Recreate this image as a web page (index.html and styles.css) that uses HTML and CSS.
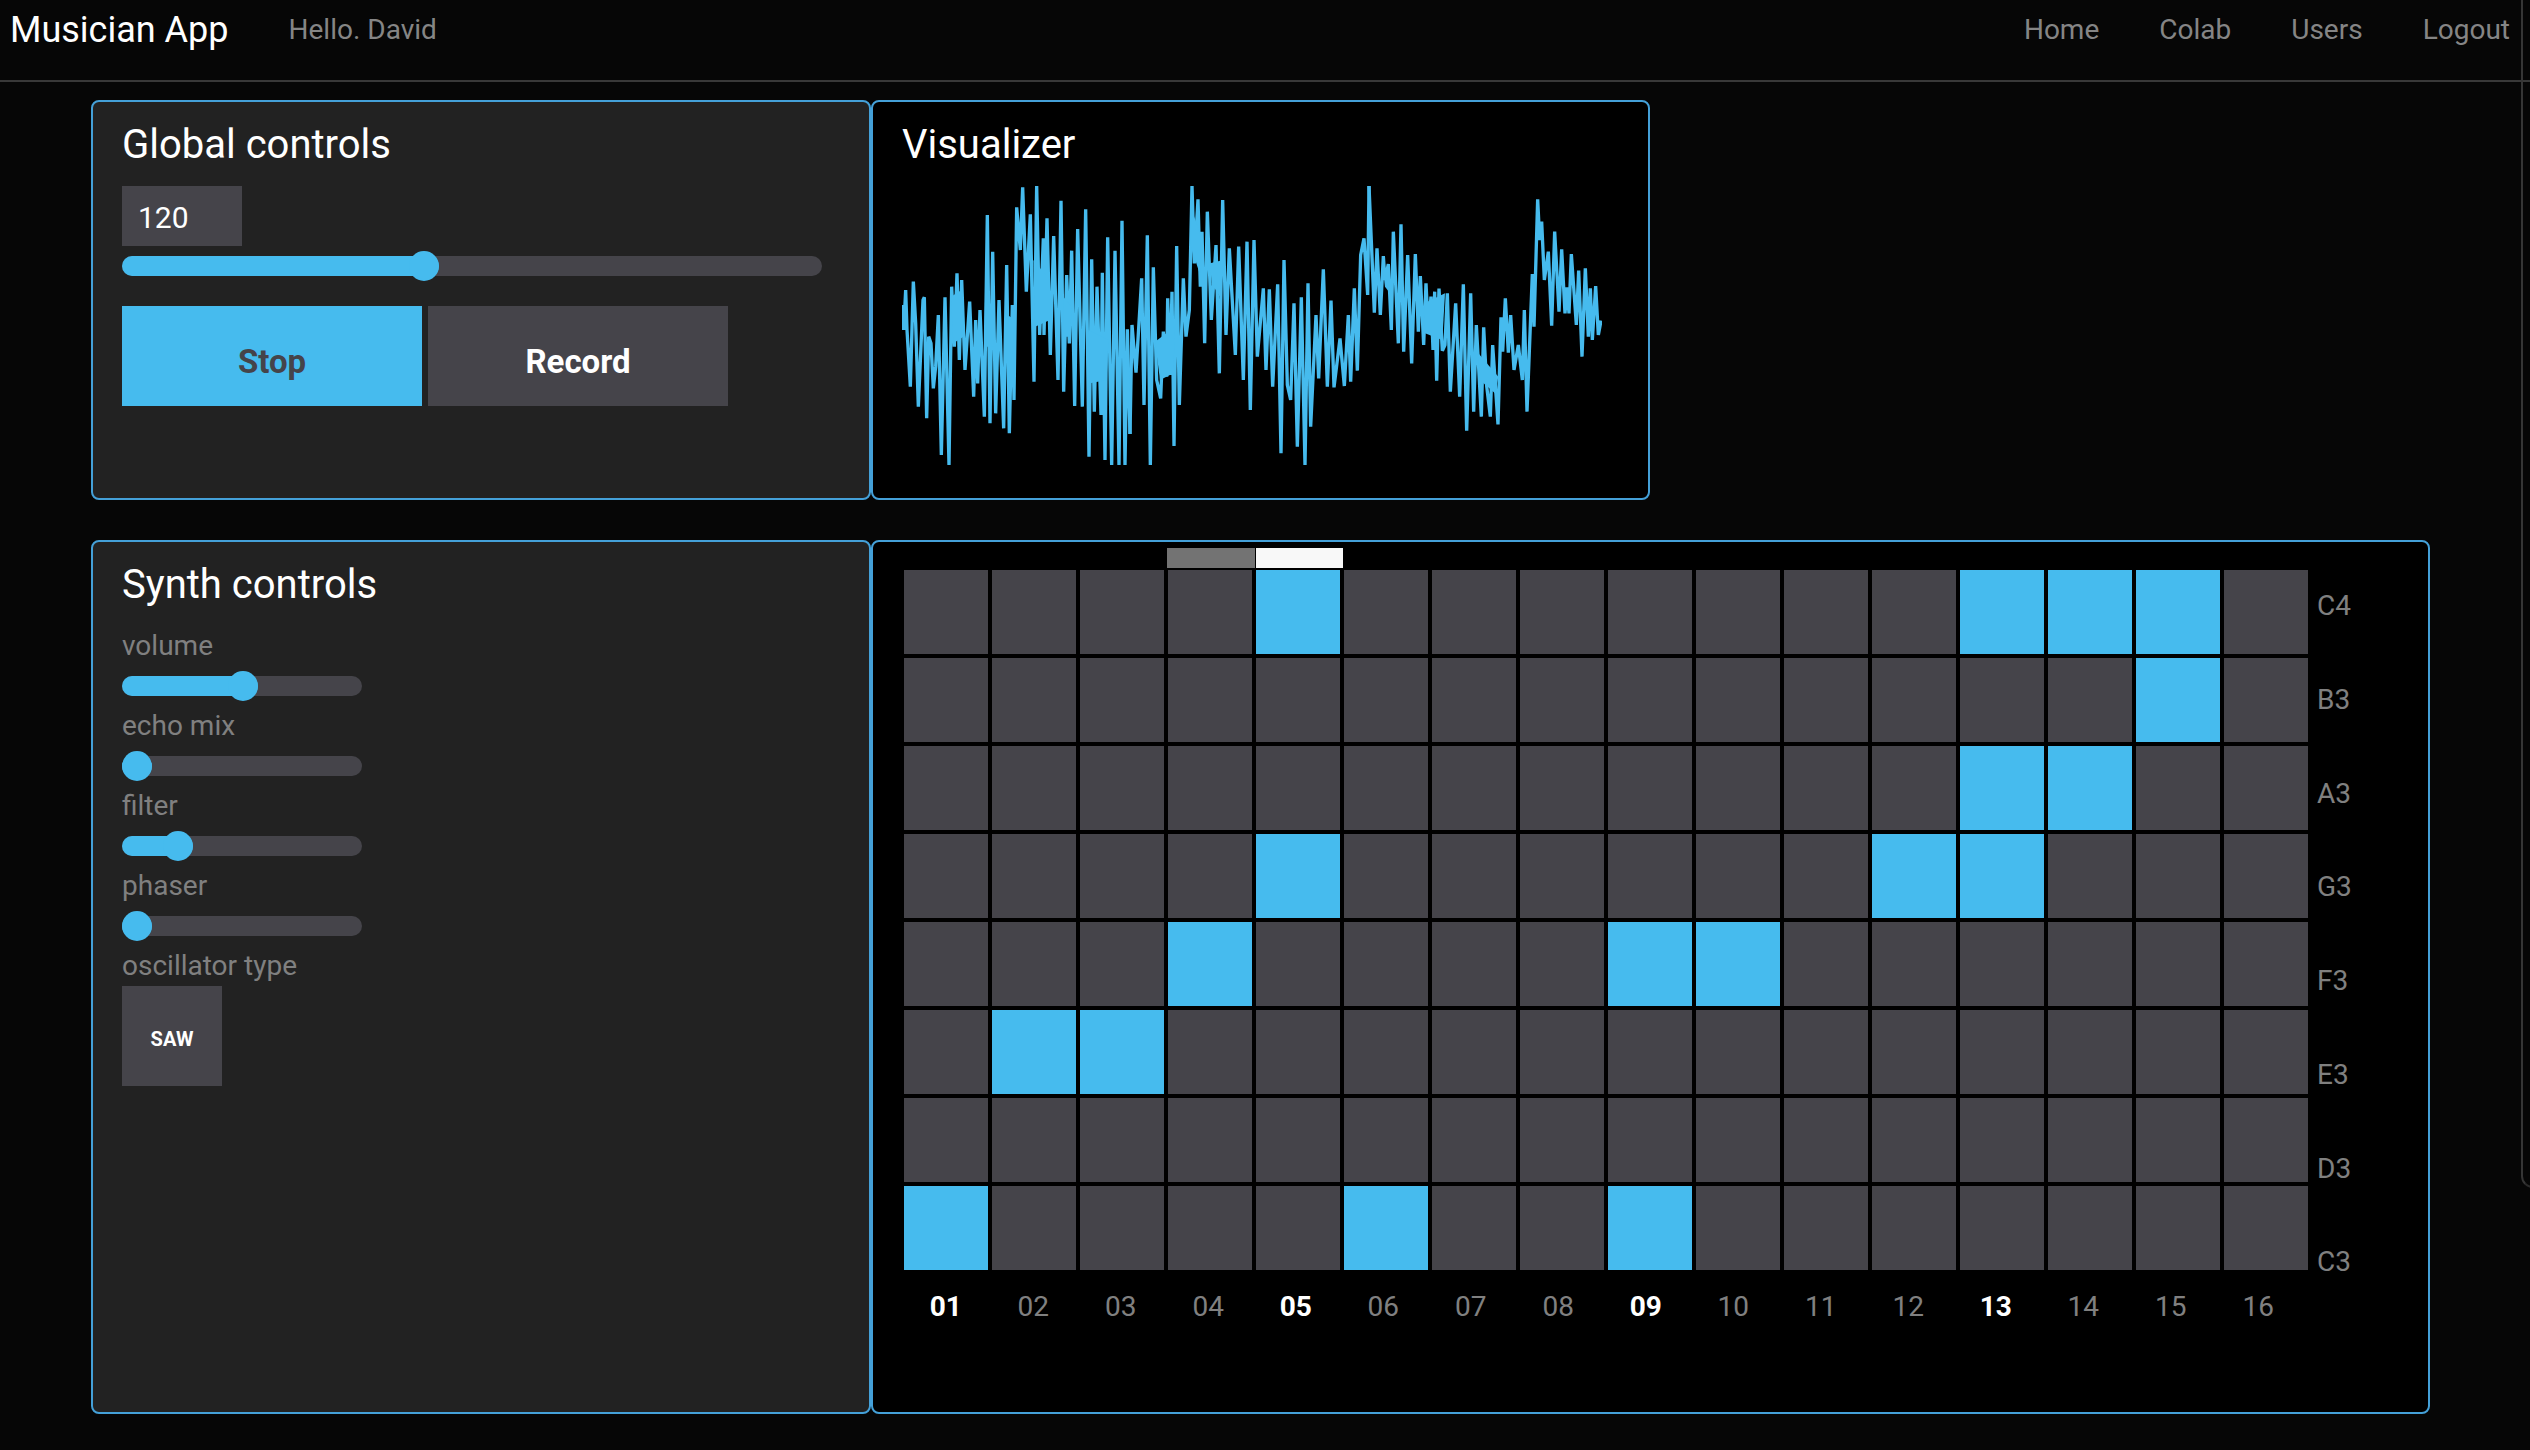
FILE: index.html
```html
<!DOCTYPE html>
<html lang="en">
<head>
    <meta charset="UTF-8">
    <title>Musician App</title>
    <link rel="stylesheet" href="styles.css">
</head>
<body>
    <header class="navbar">
        <a class="brand" href="#">Musician App</a>
        <span class="greeting">Hello. David</span>
        <nav>
            <a href="#">Home</a>
            <a href="#">Colab</a>
            <a href="#">Users</a>
            <a href="#">Logout</a>
        </nav>
    </header>
    <div class="side-drawer"></div>
    <main>
        <div class="row">
            <section class="panel panel-grey">
                <h2>Global controls</h2>
                <input class="tempo" type="text" value="120">
                <div class="slider slider-wide"><div class="fill" style="width: 317px"></div></div>
                <div class="transport">
                    <button class="btn btn-on">Stop</button>
                    <button class="btn">Record</button>
                </div>
            </section>
            <section class="panel panel-black panel-viz">
                <h2>Visualizer</h2>
                <svg class="wave" viewBox="21 18 2100 840">
                    <polyline points="24,375 26,450 32,330 36,450 46,620 55,305 62,430 70,680 84,360 88,352 95,715 101,470 108,490 115,625 122,560 130,405 139,825 150,352 162,855 170,320 178,500 186,280 193,540 200,300 210,570 224,365 236,650 242,420 248,610 255,390 268,710 277,105 285,730 293,215 302,700 312,360 326,745 335,255 343,760 352,375 357,660 365,82 376,210 383,22 394,335 406,103 417,605 425,18 434,465 445,175 447,465 456,115 466,525 476,168 489,600 498,62 506,635 515,285 523,490 530,212 539,678 548,147 562,680 572,88 582,830 590,238 598,695 606,320 618,705 622,278 630,840 638,172 650,855 660,212 672,855 681,122 690,855 697,448 705,762"/>
                    <polyline transform="translate(705 0)" points="0,762 6,435 18,578 35,295 42,675 52,166 61,855 70,262 80,600 92,655 100,455 110,590 113,355 120,585 126,335 132,798 140,198 148,675 160,295 168,470 178,390 186,18 193,250 204,58 211,320 216,155 224,490 232,95 244,420 258,195 268,580 278,60 288,465 298,205 316,525 326,200 340,600 351,185 361,690 372,180 382,530 400,325 408,570 418,328 428,620 443,313 453,820 462,240 472,615 482,660 492,370 502,800 514,352 525,855 534,310 542,740 558,405 566,595 580,268 592,620 603,362 612,622 630,475 643,618 655,405 662,605 673,325 682,572 692,225 702,175 713,345 717,18"/>
                    <polyline transform="translate(1410 0)" points="12,18 28,398 36,205 46,405 55,228 60,300 70,252 79,450 85,155 100,490 108,133 116,515 128,225 140,550 151,222 160,455 166,288 176,495 183,310 190,455 198,350 204,510 209,335 215,602 222,326 232,512 240,495 247,340 256,635 272,370 284,650 295,313 305,752 317,340 326,695 334,435 349,710 356,442 365,618 376,710 383,495 399,733 408,412 413,515 421,355 430,518 437,405 447,570 460,495 472,600 478,390 486,695 502,282 507,440 518,58 524,180 530,125 538,300 550,215 560,437 569,155 582,395 590,208 600,400 606,322 612,400 619,222 634,435 641,272 651,530 661,265 670,470 676,325 682,480 692,318 700,465 708,422"/>
                    <!-- where the trace is so dense it reads as solid -->
                    <polygon points="168,350 200,330 205,470 175,490"/>
                    <polygon points="270,360 300,380 300,500 268,500"/>
                    <polygon points="330,400 360,420 350,540 330,540"/>
                    <polygon points="415,240 465,300 465,420 420,440"/>
                    <polygon points="505,350 530,380 525,470 505,470"/>
                    <polygon points="580,450 640,480 635,600 585,610"/>
                    <polygon transform="translate(705 0)" points="75,485 135,440 130,580 90,600"/>
                    <polygon transform="translate(705 0)" points="182,80 210,160 212,290 183,200"/>
                    <polygon transform="translate(705 0)" points="240,250 280,240 270,350 245,310"/>
                    <polygon transform="translate(1410 0)" points="55,280 75,300 75,340 60,320"/>
                    <polygon transform="translate(1410 0)" points="178,370 240,340 232,480 180,460"/>
                    <polygon transform="translate(1410 0)" points="340,520 400,590 390,640 345,600"/>
                </svg>
            </section>
        </div>
        <div class="row row-bottom">
            <section class="panel panel-grey">
                <h2>Synth controls</h2>
                <div class="control">
                    <label>volume</label>
                    <div class="slider"><div class="fill" style="width: 136px"></div></div>
                </div>
                <div class="control">
                    <label>echo mix</label>
                    <div class="slider"><div class="fill" style="width: 30px"></div></div>
                </div>
                <div class="control">
                    <label>filter</label>
                    <div class="slider"><div class="fill" style="width: 71px"></div></div>
                </div>
                <div class="control">
                    <label>phaser</label>
                    <div class="slider"><div class="fill" style="width: 30px"></div></div>
                </div>
                <div class="control">
                    <label>oscillator type</label>
                    <button class="osc">SAW</button>
                </div>
            </section>
            <section class="panel panel-black panel-seq">
                <div class="playhead">
                    <i></i><i></i><i></i><i class="trail"></i><i class="now"></i><i></i><i></i><i></i>
                    <i></i><i></i><i></i><i></i><i></i><i></i><i></i><i></i>
                </div>
                <div class="seq-body">
                    <div class="seq-main">
                        <div class="grid">
                            <!-- C4 -->
                            <div></div><div></div><div></div><div></div><div class="on"></div><div></div><div></div><div></div><div></div><div></div><div></div><div></div><div class="on"></div><div class="on"></div><div class="on"></div><div></div>
                            <!-- B3 -->
                            <div></div><div></div><div></div><div></div><div></div><div></div><div></div><div></div><div></div><div></div><div></div><div></div><div></div><div></div><div class="on"></div><div></div>
                            <!-- A3 -->
                            <div></div><div></div><div></div><div></div><div></div><div></div><div></div><div></div><div></div><div></div><div></div><div></div><div class="on"></div><div class="on"></div><div></div><div></div>
                            <!-- G3 -->
                            <div></div><div></div><div></div><div></div><div class="on"></div><div></div><div></div><div></div><div></div><div></div><div></div><div class="on"></div><div class="on"></div><div></div><div></div><div></div>
                            <!-- F3 -->
                            <div></div><div></div><div></div><div class="on"></div><div></div><div></div><div></div><div></div><div class="on"></div><div class="on"></div><div></div><div></div><div></div><div></div><div></div><div></div>
                            <!-- E3 -->
                            <div></div><div class="on"></div><div class="on"></div><div></div><div></div><div></div><div></div><div></div><div></div><div></div><div></div><div></div><div></div><div></div><div></div><div></div>
                            <!-- D3 -->
                            <div></div><div></div><div></div><div></div><div></div><div></div><div></div><div></div><div></div><div></div><div></div><div></div><div></div><div></div><div></div><div></div>
                            <!-- C3 -->
                            <div class="on"></div><div></div><div></div><div></div><div></div><div class="on"></div><div></div><div></div><div class="on"></div><div></div><div></div><div></div><div></div><div></div><div></div><div></div>
                        </div>
                        <div class="steps">
                            <span class="beat">01</span><span>02</span><span>03</span><span>04</span>
                            <span class="beat">05</span><span>06</span><span>07</span><span>08</span>
                            <span class="beat">09</span><span>10</span><span>11</span><span>12</span>
                            <span class="beat">13</span><span>14</span><span>15</span><span>16</span>
                        </div>
                    </div>
                    <div class="notes">
                        <span>C4</span><span>B3</span><span>A3</span><span>G3</span>
                        <span>F3</span><span>E3</span><span>D3</span><span>C3</span>
                    </div>
                </div>
            </section>
        </div>
    </main>
</body>
</html>
```

FILE: styles.css
```css
* {
    box-sizing: border-box;
}
html, body {
    height: 100%;
    overflow: hidden;
}
body {
    margin: 0;
    position: relative;
    background-color: #060606;
    color: #808080;
    font-family: Roboto, sans-serif;
    font-size: 28px;
    line-height: 42px;
}
.navbar {
    display: flex;
    align-items: center;
    height: 82px;
    padding: 0 20px 20px 10px;
    border-bottom: 2px solid #383838;
}
.brand {
    color: #fff;
    font-size: 36px;
    text-decoration: none;
}
.greeting {
    margin-left: 60px;
    color: #858585;
}
.navbar nav {
    display: flex;
    gap: 60px;
    margin-left: auto;
}
.navbar nav a {
    color: #858585;
    text-decoration: none;
}
.side-drawer {
    position: absolute;
    top: 0;
    left: 2521px;
    width: 40px;
    height: 1188px;
    border-left: 2px solid #353535;
    border-bottom: 2px solid #2a2a2a;
    border-bottom-left-radius: 12px;
}
main {
    padding: 18px 0 0 91px;
}
.row {
    display: flex;
}
.row-bottom {
    margin-top: 40px;
}
.panel {
    width: 780px;
    height: 400px;
    padding: 17px 29px 14px;
    border: 2px solid #44a0d8;
    border-radius: 8px;
}
.row-bottom .panel {
    height: 874px;
}
.panel-grey {
    background-color: #222;
}
.panel-black {
    background-color: #000;
}
.panel-viz {
    width: 779px;
}
.panel h2 {
    margin: 0 0 15px;
    color: #fff;
    font-size: 40px;
    font-weight: 400;
    line-height: 52px;
}
.tempo {
    display: block;
    width: 120px;
    height: 60px;
    padding: 2px 16px 0;
    border: none;
    background-color: #45444a;
    color: #fff;
    font-family: inherit;
    font-size: 30px;
}
.slider {
    width: 240px;
    height: 20px;
    border-radius: 10px;
    background-color: #45444a;
}
.slider-wide {
    width: 700px;
    margin-top: 10px;
}
.fill {
    position: relative;
    height: 20px;
    border-radius: 10px;
    background-color: #46bbee;
}
.fill::after {
    content: "";
    position: absolute;
    top: -5px;
    right: 0;
    width: 30px;
    height: 30px;
    border-radius: 50%;
    background-color: #46bbee;
}
.transport {
    display: flex;
    gap: 6px;
    margin-top: 30px;
}
.btn {
    width: 300px;
    height: 100px;
    padding-top: 12px;
    border: none;
    background-color: #45444a;
    color: #fff;
    font-family: inherit;
    font-size: 33px;
    font-weight: 700;
}
.btn-on {
    background-color: #46bbee;
    color: #45444a;
}
.wave {
    display: block;
    width: 700px;
    height: 280px;
}
.wave polyline {
    fill: none;
    stroke: #46bbee;
    stroke-width: 10;
    stroke-linejoin: bevel;
}
.wave polygon {
    fill: #46bbee;
}
.control {
    padding-top: 9px;
}
.panel h2 + .control {
    margin-top: -10px;
}
.control label {
    display: block;
    margin-bottom: 9px;
}
.osc {
    display: block;
    width: 100px;
    height: 100px;
    margin-top: -10px;
    padding-top: 6px;
    border: none;
    background-color: #45444a;
    color: #fff;
    font-family: inherit;
    font-size: 20px;
    font-weight: 700;
}
.panel-seq {
    width: 1559px;
    padding-top: 6px;
}
.playhead {
    display: flex;
    gap: 1px;
    height: 20px;
    margin-left: -2px;
}
.playhead i {
    width: 88px;
}
.playhead .trail {
    background-color: #737373;
}
.playhead .now {
    width: 87px;
    background-color: #f8f8f8;
}
.seq-body {
    display: flex;
}
.seq-main {
    width: 1408px;
}
.grid {
    display: grid;
    grid-template-columns: repeat(16, 88px);
    grid-auto-rows: 88px;
}
.grid div {
    margin: 2px;
    background-color: #45444a;
}
.grid .on {
    background-color: #46bbee;
}
.steps {
    display: grid;
    grid-template-columns: repeat(16, 87.5px);
    margin-top: 14px;
    text-align: center;
}
.beat {
    color: #fff;
    font-weight: 700;
}
.notes {
    margin-left: 7px;
}
.notes span {
    display: block;
    height: 93.75px;
    padding-top: 17px;
}
```
